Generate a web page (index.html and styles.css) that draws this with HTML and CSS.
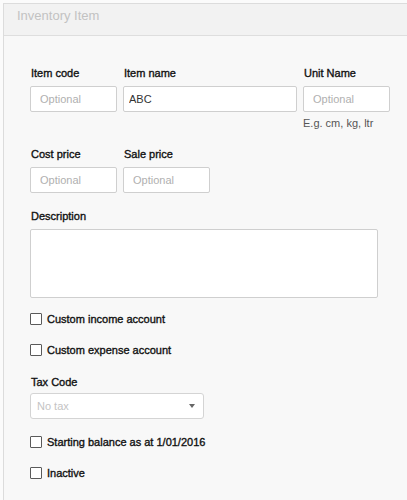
FILE: index.html
```html
<!DOCTYPE html>
<html>
<head>
<meta charset="utf-8">
<link rel="stylesheet" href="styles.css">
</head>
<body>
<div class="panel">
  <div class="panel-header">Inventory Item</div>
  <div class="panel-body">
    <div class="row row-first">
      <div class="field w-sm">
        <label class="lbl">Item code</label>
        <input class="inp" type="text" placeholder="Optional">
      </div>
      <div class="field w-lg">
        <label class="lbl">Item name</label>
        <input class="inp filled" type="text" value="ABC">
      </div>
      <div class="field w-sm">
        <label class="lbl">Unit Name</label>
        <input class="inp" type="text" placeholder="Optional">
        <div class="hint">E.g. cm, kg, ltr</div>
      </div>
    </div>
    <div class="row row-second">
      <div class="field w-sm">
        <label class="lbl">Cost price</label>
        <input class="inp" type="text" placeholder="Optional">
      </div>
      <div class="field w-sm">
        <label class="lbl">Sale price</label>
        <input class="inp" type="text" placeholder="Optional">
      </div>
    </div>
    <div class="field desc">
      <label class="lbl">Description</label>
      <textarea class="area"></textarea>
    </div>
    <label class="check check-1"><input type="checkbox" class="cb"><span>Custom income account</span></label>
    <label class="check check-2"><input type="checkbox" class="cb"><span>Custom expense account</span></label>
    <div class="field tax">
      <label class="lbl lbl-tax">Tax Code</label>
      <div class="select">
        <span class="select-text">No tax</span>
        <svg class="caret" width="6" height="4" viewBox="0 0 6 4"><path d="M0 0H6L3 4Z" fill="#666"/></svg>
      </div>
    </div>
    <label class="check check-3"><input type="checkbox" class="cb"><span>Starting balance as at 1/01/2016</span></label>
    <label class="check check-4"><input type="checkbox" class="cb"><span>Inactive</span></label>
  </div>
</div>
</body>
</html>
```

FILE: styles.css
```css
html, body {
  margin: 0;
  padding: 0;
  background: #fbfbfb;
}
body {
  font-family: "Liberation Sans", Arial, sans-serif;
  font-size: 11px;
  color: #222;
}
.panel {
  margin: 3px 0 0 3px;
  border-top: 1px solid #dcdcdc;
  border-left: 1px solid #dcdcdc;
  background: #f8f8f8;
  height: 496px;
}
.panel-header {
  height: 32px;
  box-sizing: border-box;
  padding: 4px 0 0 13px;
  font-size: 13px;
  line-height: 16px;
  color: #c2c2c2;
  background: #f2f2f2;
  border-bottom: 1px solid #dedede;
}
.panel-body {
  padding: 31px 0 0 26px;
}
.row {
  display: flex;
  gap: 6px;
  align-items: flex-start;
}
.row-first { margin-bottom: 18px; }
.row-second { margin-bottom: 17px; }
.field {
  display: flex;
  flex-direction: column;
}
.w-sm { width: 87px; }
.w-lg { width: 174px; }
.lbl {
  display: block;
  font-weight: normal;
  -webkit-text-stroke: 0.35px #111;
  line-height: 13px;
  color: #111;
  margin-bottom: 6px;
  padding-left: 1px;
}
.lbl-tax { margin-bottom: 4px; }
.inp {
  box-sizing: border-box;
  width: 100%;
  height: 26px;
  margin: 0;
  border: 1px solid #cfcfcf;
  border-radius: 2px;
  background: #fff;
  padding: 0 9px;
  font-family: "Liberation Sans", Arial, sans-serif;
  font-size: 11px;
  color: #333;
  outline: none;
}
.inp.filled { padding: 0 5px; }
.inp::placeholder { color: #b0b0b0; }
.hint {
  margin-top: 5px;
  line-height: 13px;
  color: #555;
}
.desc { width: 348px; }
.area {
  box-sizing: border-box;
  width: 348px;
  height: 69px;
  margin: 0;
  border: 1px solid #cfcfcf;
  border-radius: 2px;
  background: #fff;
  resize: none;
  outline: none;
}
.check {
  display: flex;
  align-items: flex-start;
  gap: 5px;
  height: 13px;
  line-height: 13px;
  color: #111;
  -webkit-text-stroke: 0.35px #111;
}
.check-1 { margin-top: 15px; }
.check-2 { margin-top: 18px; }
.check-3 { margin-top: 17px; }
.check-4 { margin-top: 18px; }
.cb {
  appearance: none;
  -webkit-appearance: none;
  box-sizing: border-box;
  width: 12px;
  height: 12px;
  margin: 0;
  border: 1px solid #5a5a5a;
  border-radius: 1px;
  background: #fff;
  flex: none;
}
.tax {
  margin-top: 19px;
  width: 174px;
}
.select {
  box-sizing: border-box;
  height: 26px;
  border: 1px solid #d4d4d4;
  border-radius: 3px;
  background: #fff;
  display: flex;
  align-items: center;
  justify-content: space-between;
  padding: 0 8px 0 6px;
}
.select-text { color: #c4c4c4; }
.caret { display: block; }
```
